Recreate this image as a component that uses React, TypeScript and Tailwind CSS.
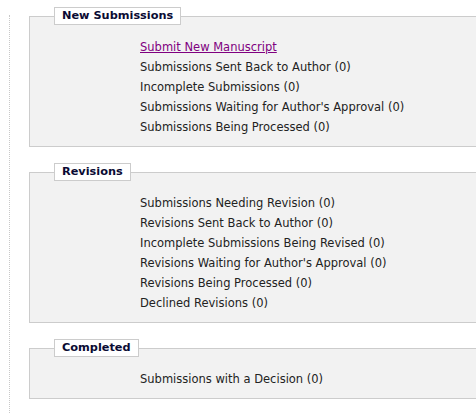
const sections = [
  {
    title: 'New Submissions',
    items: [
      { label: 'Submit New Manuscript', link: true },
      { label: 'Submissions Sent Back to Author (0)' },
      { label: 'Incomplete Submissions (0)' },
      { label: "Submissions Waiting for Author's Approval (0)" },
      { label: 'Submissions Being Processed (0)' },
    ],
  },
  {
    title: 'Revisions',
    items: [
      { label: 'Submissions Needing Revision (0)' },
      { label: 'Revisions Sent Back to Author (0)' },
      { label: 'Incomplete Submissions Being Revised (0)' },
      { label: "Revisions Waiting for Author's Approval (0)" },
      { label: 'Revisions Being Processed (0)' },
      { label: 'Declined Revisions (0)' },
    ],
  },
  {
    title: 'Completed',
    items: [{ label: 'Submissions with a Decision (0)' }],
  },
]

export default function App() {
  return (
    <div className="w-[476px] h-[413px] bg-white overflow-hidden font-['Verdana','DejaVu_Sans',sans-serif] text-[11.5px] text-[#222]">
      <div className="flex h-full">
        {/* dotted rule on the left */}
        <div className="w-[9px] shrink-0" />
        <div className="mt-[15px] w-0 border-l border-dotted border-[#c8c8c8]" />
        <div className="flex-1 pl-[19px] flex flex-col gap-[16px] pt-[7px]">
          {sections.map(section => (
            <fieldset
              key={section.title}
              className="border border-r-0 border-[#cccccc] bg-[#f2f2f2] pb-[9px] mr-[-4px]"
            >
              <legend className="ml-[24px] border border-[#cccccc] bg-white px-[7px] py-[1px] font-bold text-[11.3px] leading-[14px] text-[#0a0a33]">
                {section.title}
              </legend>
              <div className="pt-[12px] pl-[110px]">
                {section.items.map(item => (
                  <div key={item.label} className="h-[20px] leading-[20px] whitespace-nowrap">
                    {item.link ? (
                      <a href="#" className="text-[#800080] underline">
                        {item.label}
                      </a>
                    ) : (
                      item.label
                    )}
                  </div>
                ))}
              </div>
            </fieldset>
          ))}
        </div>
      </div>
    </div>
  )
}
